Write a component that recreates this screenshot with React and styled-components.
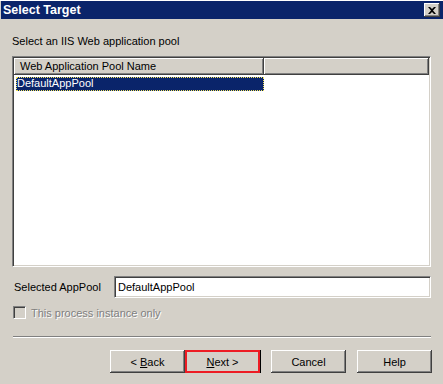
import React from "react";
import styled, { createGlobalStyle } from "styled-components";

const Global = createGlobalStyle`
  html, body {
    margin: 0;
    padding: 0;
    background: #d4d0c8;
  }
  body {
    font-family: "Liberation Sans", Arial, sans-serif;
    font-size: 11px;
    color: #000;
  }
`;

const Window = styled.div`
  width: 443px;
  height: 384px;
  box-sizing: border-box;
  background: #d4d0c8;
  border-top: 1px solid #ffffff;
  padding: 0 0 0 1px;
  display: flex;
  flex-direction: column;
`;

const TitleBar = styled.div`
  height: 18px;
  background: #0a246a;
  display: flex;
  align-items: center;
  justify-content: space-between;
  padding: 0 3px 0 2px;
  color: #fff;
  font-weight: bold;
  font-size: 12.5px;
`;

const CloseBtn = styled.div`
  width: 16px;
  height: 14px;
  box-sizing: border-box;
  background: #d4d0c8;
  box-shadow: inset -1px -1px #404040, inset 1px 1px #ffffff,
    inset -2px -2px #808080;
  display: flex;
  align-items: center;
  justify-content: center;
`;

const Body = styled.div`
  padding: 15px 12px 0 11px;
  display: flex;
  flex-direction: column;
`;

const Prompt = styled.div`
  line-height: 14px;
  height: 14px;
`;

const ListBox = styled.div`
  margin-top: 8px;
  height: 211px;
  box-sizing: border-box;
  background: #fff;
  border-top: 1px solid #808080;
  border-left: 1px solid #808080;
  border-right: 1px solid #ffffff;
  border-bottom: 1px solid #ffffff;
  box-shadow: inset 1px 1px #404040, inset -1px -1px #d4d0c8;
  padding: 1px;
  display: flex;
  flex-direction: column;
`;

const Header = styled.div`
  display: flex;
  height: 17px;
  background: #d4d0c8;
`;

const HeaderCell = styled.div`
  width: ${(p) => p.$w};
  flex: ${(p) => (p.$grow ? 1 : "none")};
  box-sizing: border-box;
  box-shadow: inset -1px -1px #404040, inset 1px 1px #ffffff,
    inset -2px -2px #808080;
  padding: 0 6px;
  line-height: 16px;
  white-space: nowrap;
`;

const Rows = styled.div`
  padding: 2px 0 0 2px;
`;

const Row = styled.div`
  width: 248px;
  height: 14px;
  box-sizing: border-box;
  line-height: 12px;
  padding-left: 1px;
  color: ${(p) => (p.$selected ? "#fff" : "#000")};
  background: ${(p) => (p.$selected ? "#0a246a" : "transparent")};
  outline: ${(p) => (p.$selected ? "1px dotted #f4e45c" : "none")};
  outline-offset: -1px;
`;

const FieldRow = styled.div`
  margin-top: 9px;
  display: flex;
  align-items: center;
`;

const Label = styled.div`
  width: 102px;
  box-sizing: border-box;
  padding-left: 2px;
  font-size: 11px;
`;

const TextBox = styled.div`
  flex: 1;
  height: 22px;
  box-sizing: border-box;
  background: #fff;
  border-top: 1px solid #808080;
  border-left: 1px solid #808080;
  border-right: 1px solid #ffffff;
  border-bottom: 1px solid #ffffff;
  box-shadow: inset 1px 1px #404040, inset -1px -1px #d4d0c8;
  padding: 3px 0 0 3px;
  line-height: 14px;
`;

const CheckRow = styled.div`
  margin-top: 8px;
  display: flex;
  align-items: center;
  gap: 5px;
  color: #808080;
  text-shadow: 1px 1px #ffffff;
  padding-left: 1px;
`;

const Check = styled.div`
  width: 13px;
  height: 13px;
  box-sizing: border-box;
  background: #d4d0c8;
  border-top: 1px solid #808080;
  border-left: 1px solid #808080;
  border-right: 1px solid #ffffff;
  border-bottom: 1px solid #ffffff;
  box-shadow: inset 1px 1px #404040, inset -1px -1px #d4d0c8;
`;

const Separator = styled.div`
  margin-top: 17px;
  margin-left: 1px;
  height: 1px;
  background: #808080;
  border-bottom: 1px solid #ffffff;
`;

const Buttons = styled.div`
  margin-top: 12px;
  margin-right: -1px;
  display: flex;
  justify-content: flex-end;
`;

const Button = styled.div`
  width: 75px;
  height: 23px;
  box-sizing: border-box;
  margin-left: ${(p) => p.$ml || "0px"};
  display: flex;
  align-items: center;
  justify-content: center;
  padding-top: 1px;
  background: #d4d0c8;
  box-shadow: inset -1px -1px #404040, inset 1px 1px #ffffff,
    inset -2px -2px #808080;
  font-size: 11px;
  ${(p) =>
    p.$marked &&
    `
    border: 2px solid #ed1c24;
    box-shadow: 1px 0 #000000;
  `}

  u {
    text-decoration: underline;
  }
`;

export default function App() {
  return (
    <>
      <Global />
      <Window>
        <TitleBar>
          <span>Select Target</span>
          <CloseBtn>
            <svg width="8" height="7" viewBox="0 0 8 7">
              <path
                d="M0 0h2l2 2 2-2h2L5 3.5 8 7H6L4 5 2 7H0l3-3.5z"
                fill="#000"
              />
            </svg>
          </CloseBtn>
        </TitleBar>
        <Body>
          <Prompt>Select an IIS Web application pool</Prompt>
          <ListBox>
            <Header>
              <HeaderCell $w="250px">Web Application Pool Name</HeaderCell>
              <HeaderCell $grow />
            </Header>
            <Rows>
              <Row $selected>DefaultAppPool</Row>
            </Rows>
          </ListBox>
          <FieldRow>
            <Label>Selected AppPool</Label>
            <TextBox>DefaultAppPool</TextBox>
          </FieldRow>
          <CheckRow>
            <Check />
            <span>This process instance only</span>
          </CheckRow>
          <Separator />
          <Buttons>
            <Button>
              &lt;&nbsp;<u>B</u>ack
            </Button>
            <Button $marked>
              <u>N</u>ext &gt;
            </Button>
            <Button $ml="11px">Cancel</Button>
            <Button $ml="11px">Help</Button>
          </Buttons>
        </Body>
      </Window>
    </>
  );
}
